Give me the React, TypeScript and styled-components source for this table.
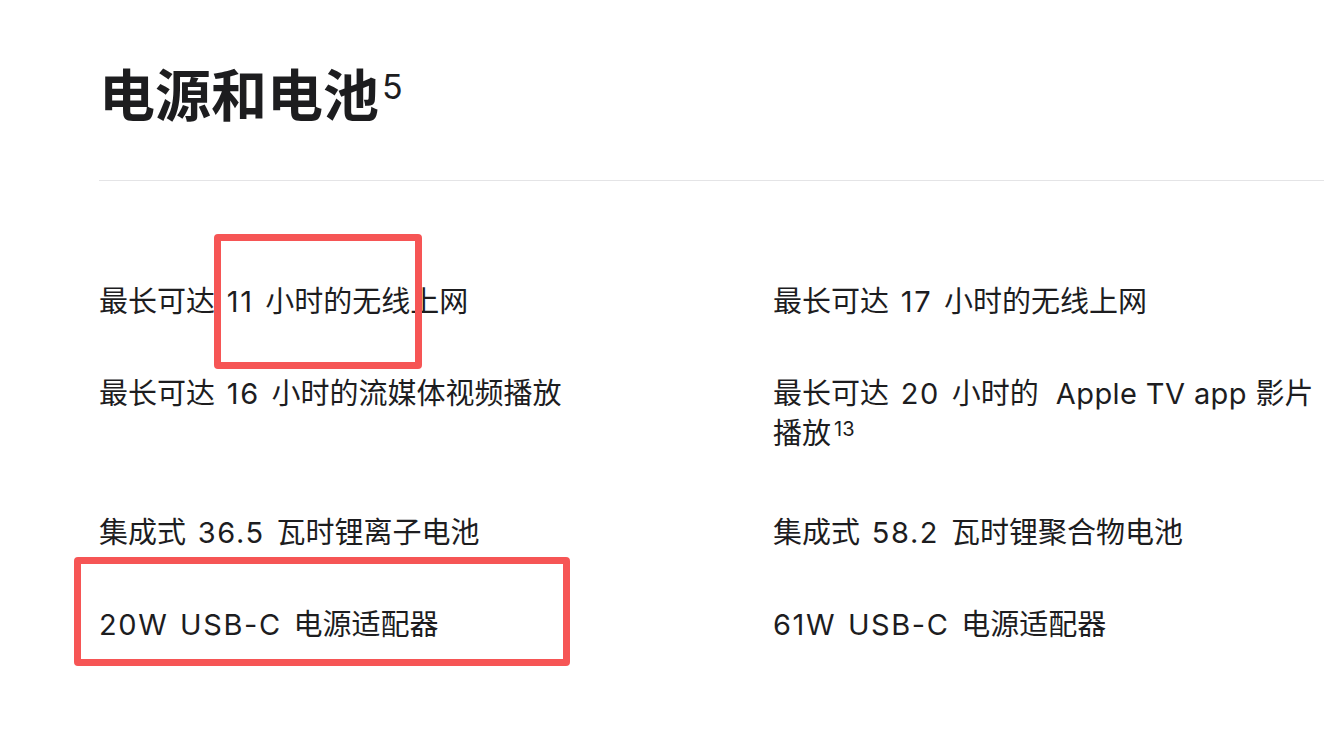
import React from 'react';
import styled, { createGlobalStyle } from 'styled-components';

const GlobalStyle = createGlobalStyle`
  html, body {
    margin: 0;
    padding: 0;
    background: #fff;
    overflow: hidden;
  }
  body {
    font-family: Inter, "Noto Sans CJK SC", sans-serif;
    color: #1d1d1f;
  }
`;

const Page = styled.div`
  position: relative;
  width: 1324px;
  height: 730px;
  padding: 64px 0 0 99px;
  box-sizing: border-box;
`;

const Title = styled.h2`
  margin: 0 0 52px;
  font-size: 56px;
  line-height: 64px;
  height: 64px;
  font-weight: 600;
  letter-spacing: 0;
`;

const Sup = styled.span<{ $size: number; $raise: number }>`
  font-size: ${(p) => p.$size}px;
  font-weight: 400;
  line-height: 0;
  position: relative;
  top: -${(p) => p.$raise}px;
  margin-left: 3px;
`;

const Divider = styled.hr`
  margin: 0;
  border: 0;
  height: 1px;
  background: #e4e4e6;
`;

const SpecGrid = styled.div`
  display: grid;
  grid-template-columns: 674px 1fr;
  row-gap: 52px;
  margin-top: 101px;
`;

const Spec = styled.div<{ $noted?: boolean }>`
  font-size: 29px;
  line-height: 40px;
  font-weight: 400;
  white-space: nowrap;
  padding-bottom: ${(p) => (p.$noted ? 7 : 0)}px;
`;

// Latin runs in the reference are set a little wider than Inter
const Latin = styled.span<{ $word?: boolean }>`
  letter-spacing: ${(p) => (p.$word ? 0.4 : 1.6)}px;
  word-spacing: ${(p) => (p.$word ? 0 : 2)}px;
`;

const Highlight = styled.div`
  position: absolute;
  border: 7px solid #f65555;
  border-radius: 4px;
  box-sizing: border-box;
  pointer-events: none;
`;

const App: React.FC = () => {
  return (
    <>
      <GlobalStyle />
      <Page>
        <Title>
          电源和电池<Sup $size={34} $raise={17}>5</Sup>
        </Title>
        <Divider />
        <SpecGrid>
          <Spec>
            最长可达<Latin> 11 </Latin>小时的无线上网
          </Spec>
          <Spec>
            最长可达<Latin> 17 </Latin>小时的无线上网
          </Spec>
          <Spec $noted>
            最长可达<Latin> 16 </Latin>小时的流媒体视频播放
          </Spec>
          <Spec $noted>
            最长可达<Latin> 20 </Latin>小时的<Latin $word>&nbsp; Apple TV app </Latin>影片
            <br />
            播放<Sup $size={20} $raise={8}>13</Sup>
          </Spec>
          <Spec>
            集成式<Latin> 36.5 </Latin>瓦时锂离子电池
          </Spec>
          <Spec>
            集成式<Latin> 58.2 </Latin>瓦时锂聚合物电池
          </Spec>
          <Spec>
            <Latin>20W USB-C </Latin>电源适配器
          </Spec>
          <Spec>
            <Latin>61W USB-C </Latin>电源适配器
          </Spec>
        </SpecGrid>
        <Highlight style={{ left: 214, top: 234, width: 208, height: 135 }} />
        <Highlight style={{ left: 74, top: 557, width: 496, height: 109 }} />
      </Page>
    </>
  );
};

export default App;
